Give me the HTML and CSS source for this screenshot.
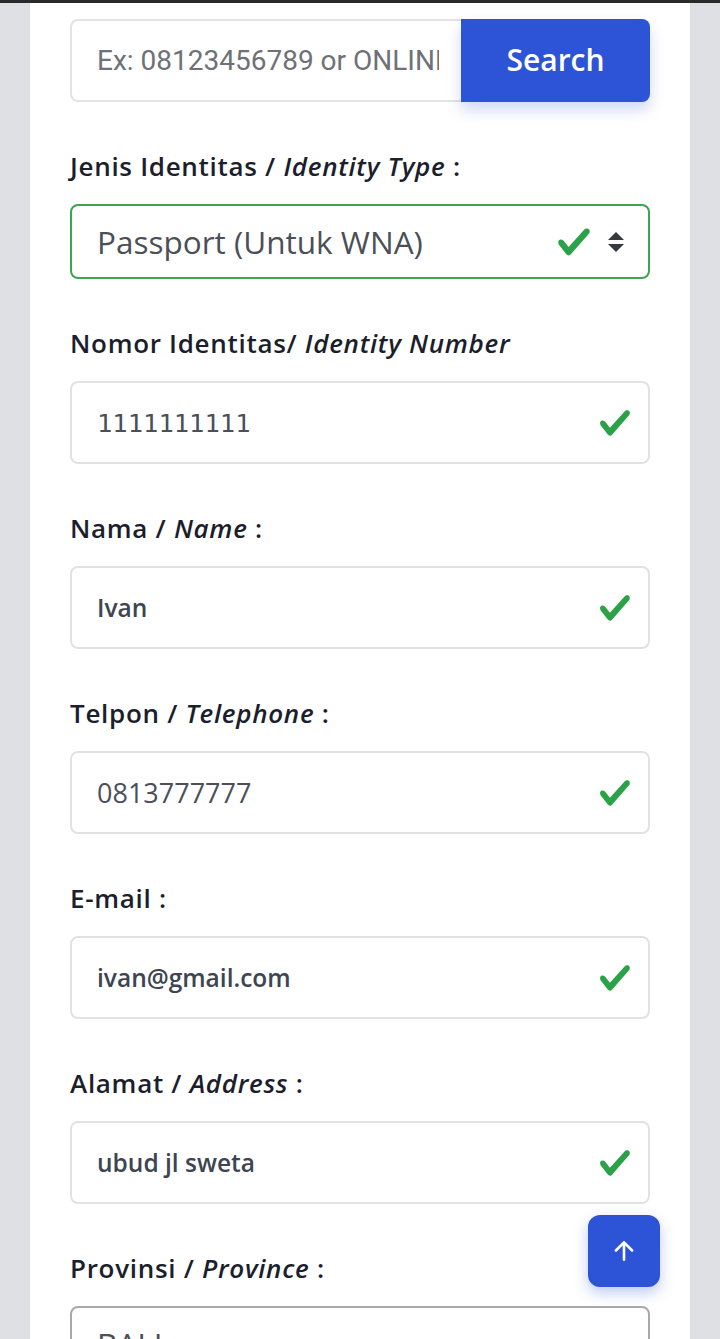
FILE: index.html
```html
<!DOCTYPE html>
<html lang="id">
<head>
<meta charset="utf-8">
<title>Form</title>
<link rel="stylesheet" href="styles.css">
</head>
<body>
<div class="topbar"></div>
<main class="card">
  <div class="search-group">
    <input class="search-input" type="text" placeholder="Ex: 08123456789 or ONLINE">
    <button class="search-btn" type="button">Search</button>
  </div>

  <div class="form-group">
    <label class="label">Jenis Identitas / <em>Identity Type</em> :</label>
    <div class="field field-select is-valid">
      <span class="select-text">Passport (Untuk WNA)</span>
      <svg class="check check-select" viewBox="0 0 8 8"><path d="M2.3 6.73L.6 4.53c-.4-1.04.46-1.4 1.1-.8l1.1 1.4 3.4-3.8c.6-.63 1.6-.27 1.2.7l-4 4.6c-.43.5-.8.4-1.1.1z"/></svg>
      <svg class="arrows" viewBox="0 0 4 5"><path d="M2 0L0 2h4zm0 5L0 3h4z"/></svg>
    </div>
  </div>

  <div class="form-group">
    <label class="label">Nomor Identitas/ <em>Identity Number</em></label>
    <div class="field">
      <input class="value value-mono" type="text" value="1111111111">
      <svg class="check" viewBox="0 0 8 8"><path d="M2.3 6.73L.6 4.53c-.4-1.04.46-1.4 1.1-.8l1.1 1.4 3.4-3.8c.6-.63 1.6-.27 1.2.7l-4 4.6c-.43.5-.8.4-1.1.1z"/></svg>
    </div>
  </div>

  <div class="form-group">
    <label class="label">Nama / <em>Name</em> :</label>
    <div class="field">
      <input class="value value-bold" type="text" value="Ivan">
      <svg class="check" viewBox="0 0 8 8"><path d="M2.3 6.73L.6 4.53c-.4-1.04.46-1.4 1.1-.8l1.1 1.4 3.4-3.8c.6-.63 1.6-.27 1.2.7l-4 4.6c-.43.5-.8.4-1.1.1z"/></svg>
    </div>
  </div>

  <div class="form-group">
    <label class="label">Telpon / <em>Telephone</em> :</label>
    <div class="field">
      <input class="value value-tel" type="text" value="0813777777">
      <svg class="check" viewBox="0 0 8 8"><path d="M2.3 6.73L.6 4.53c-.4-1.04.46-1.4 1.1-.8l1.1 1.4 3.4-3.8c.6-.63 1.6-.27 1.2.7l-4 4.6c-.43.5-.8.4-1.1.1z"/></svg>
    </div>
  </div>

  <div class="form-group">
    <label class="label">E-mail :</label>
    <div class="field">
      <input class="value value-bold" type="text" value="ivan@gmail.com">
      <svg class="check" viewBox="0 0 8 8"><path d="M2.3 6.73L.6 4.53c-.4-1.04.46-1.4 1.1-.8l1.1 1.4 3.4-3.8c.6-.63 1.6-.27 1.2.7l-4 4.6c-.43.5-.8.4-1.1.1z"/></svg>
    </div>
  </div>

  <div class="form-group">
    <label class="label">Alamat / <em>Address</em> :</label>
    <div class="field">
      <input class="value value-bold" type="text" value="ubud jl sweta">
      <svg class="check" viewBox="0 0 8 8"><path d="M2.3 6.73L.6 4.53c-.4-1.04.46-1.4 1.1-.8l1.1 1.4 3.4-3.8c.6-.63 1.6-.27 1.2.7l-4 4.6c-.43.5-.8.4-1.1.1z"/></svg>
    </div>
  </div>

  <div class="form-group">
    <label class="label">Provinsi / <em>Province</em> :</label>
    <div class="field field-select field-plain">
      <span class="select-text">BALI</span>
    </div>
  </div>
</main>

<button class="to-top" type="button" aria-label="Back to top">
  <svg viewBox="0 0 24 24"><path d="M12 20V4M4.5 11.5L12 4l7.5 7.5"/></svg>
</button>
</body>
</html>
```

FILE: styles.css
```css
* { box-sizing: border-box; }

html, body {
  margin: 0;
  padding: 0;
}

body {
  background: #dfe0e3;
  font-family: "Open Sans", Lato, sans-serif;
  color: #1b1e2c;
  min-height: 1339px;
}

.topbar {
  height: 3px;
  background: #2a2a2a;
}

.card {
  background: #ffffff;
  margin: 0 30px;
  padding: 16px 40px 60px;
  min-height: 1336px;
}

.search-group {
  display: flex;
  height: 83px;
}

.search-input {
  flex: 1;
  min-width: 0;
  border: 2px solid #e2e3e5;
  border-right: none;
  border-radius: 8px 0 0 8px;
  padding: 0 22px 0 25px;
  font-family: Roboto, sans-serif;
  font-size: 28px;
  color: #333;
  outline: none;
  background: #fff;
}

.search-input::placeholder {
  color: #6e7177;
}

.search-btn {
  width: 189px;
  border: none;
  border-radius: 0 8px 8px 0;
  background: #2d54d6;
  color: #fff;
  font-family: "Open Sans", Lato, sans-serif;
  font-size: 30px;
  font-weight: 600;
  padding: 0 0 2px;
  box-shadow: 0 8px 14px rgba(45, 84, 214, 0.22);
}

.form-group {
  margin-top: 46px;
}

.label {
  display: block;
  font-size: 26px;
  font-weight: 600;
  line-height: 36px;
  margin-bottom: 20px;
  color: #1b1e2c;
  letter-spacing: 0.7px;
}

.label em {
  font-style: italic;
}

.field {
  display: flex;
  align-items: center;
  height: 83px;
  border: 2px solid #e1e2e4;
  border-radius: 8px;
  padding: 0 16px 0 25px;
  background: #fff;
}

.field-select {
  height: 75px;
  border-color: #3ba552;
  padding-right: 24px;
}

.field-plain {
  border-color: #a9a9a9;
}

.select-text {
  flex: 1;
  font-size: 31.5px;
  color: #4b4f57;
}

.value {
  flex: 1;
  min-width: 0;
  border: none;
  outline: none;
  background: transparent;
  padding: 0;
  font-family: "Open Sans", Lato, sans-serif;
  font-size: 24.5px;
  color: #3d4452;
}

.value-bold {
  font-weight: 600;
}

.value-mono {
  font-family: "DejaVu Sans Mono", monospace;
  font-size: 25.5px;
  color: #4a505b;
}

.value-tel {
  font-size: 27px;
  color: #4a505b;
}

.check {
  width: 34px;
  height: 34px;
  fill: #2ba247;
  flex: none;
}

.check-select {
  width: 36px;
  height: 36px;
  margin-right: 16px;
}

.arrows {
  width: 16px;
  height: 20px;
  fill: #343a40;
  flex: none;
}

.to-top {
  position: fixed;
  right: 60px;
  bottom: 52px;
  width: 72px;
  height: 72px;
  border: none;
  border-radius: 12px;
  background: #2d54d6;
  box-shadow: 0 6px 14px rgba(45, 84, 214, 0.3);
  display: flex;
  align-items: center;
  justify-content: center;
  padding: 0;
}

.to-top svg {
  width: 26px;
  height: 26px;
  fill: none;
  stroke: #fff;
  stroke-width: 2.4;
  stroke-linecap: round;
  stroke-linejoin: round;
}
```
